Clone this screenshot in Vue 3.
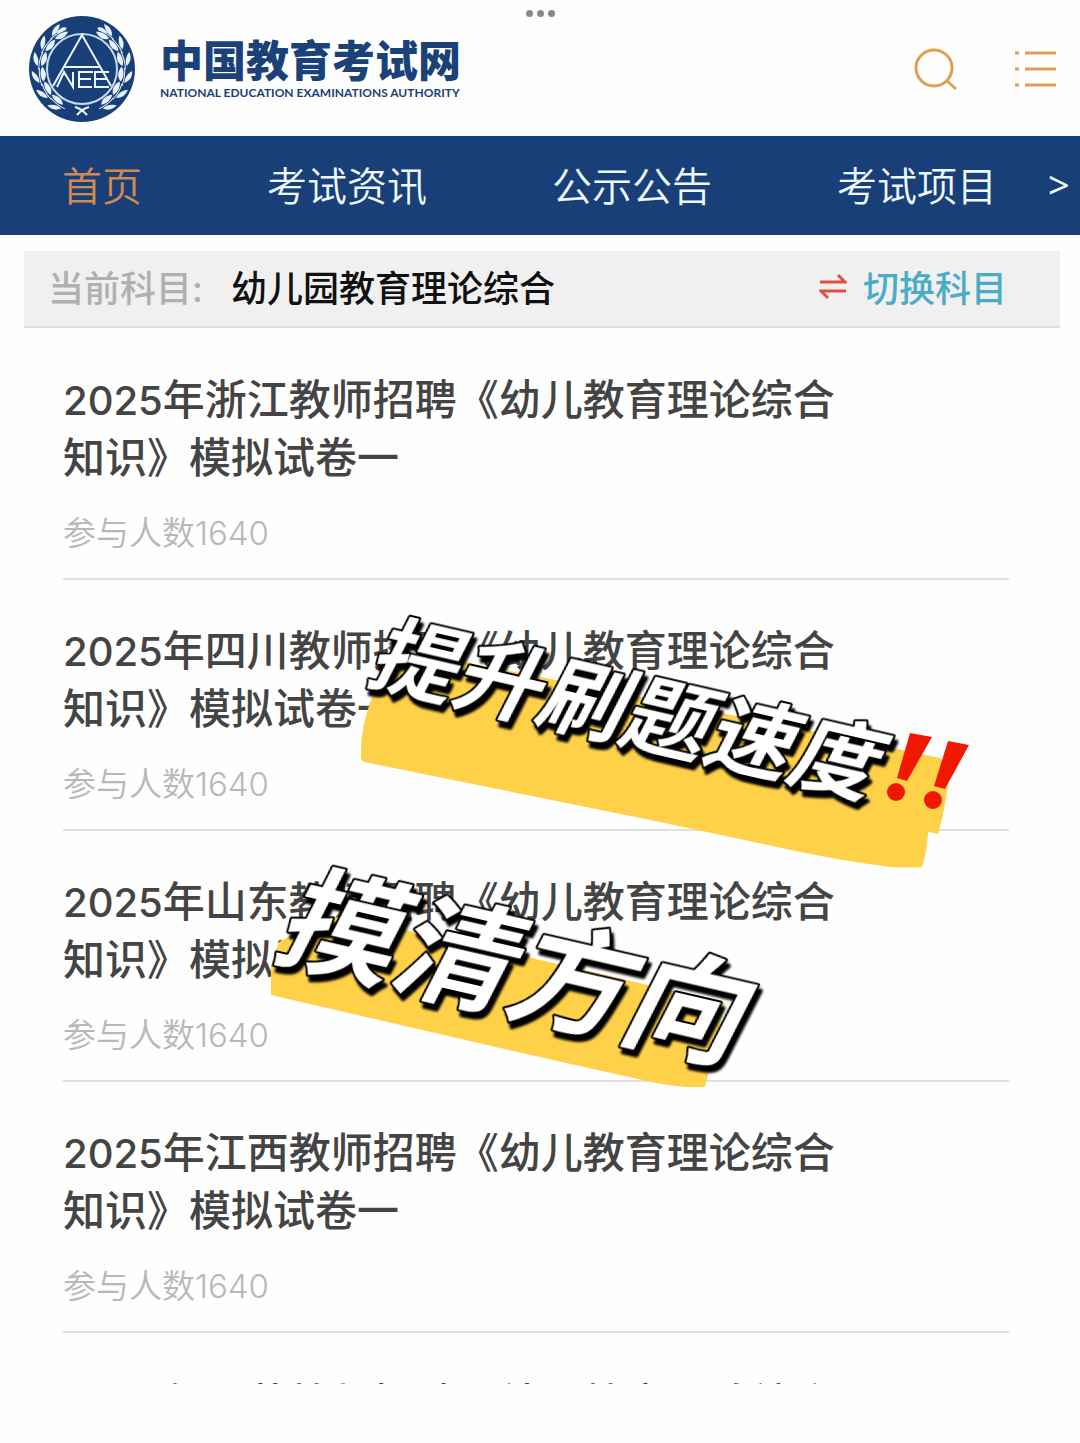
<script setup>
const navItems = ['首页', '考试资讯', '公示公告', '考试项目']
const papers = [
  { province: '浙江', count: 1640 },
  { province: '四川', count: 1640 },
  { province: '山东', count: 1640 },
  { province: '江西', count: 1640 },
  { province: '江苏' }
]
const leafAngles = [-58, -36, -14, 8, 30, 52]
</script>

<template>
  <div class="page">
    <header class="header">
      <span class="dots"><i></i><i></i><i></i></span>
      <a class="brand" href="#">
        <svg class="emblem" viewBox="-54 -54 108 108" aria-hidden="true">
          <circle r="53" fill="#193f78" />
          <g v-for="side in [1, -1]" :key="side" :transform="`scale(${side} 1)`">
            <g v-for="angle in leafAngles" :key="angle" :transform="`rotate(${angle}) translate(43 0)`">
              <path d="M-3 7C-8 2-7-3-4-8C-1-4 0 2-3 7Z" fill="#e6f2fb" />
              <path d="M1 8C0 2 4-3 7-5C8 1 6 5 1 8Z" fill="#e6f2fb" />
              <path d="M-1 11Q1 1-1-7" fill="none" stroke="#e6f2fb" stroke-width="1" />
            </g>
            <path d="M15-41Q20-44 26-36Q19-36 15-41Z" fill="#e6f2fb" />
            <path d="M-5 46Q0 40 7 38" fill="none" stroke="#e6f2fb" stroke-width="2" />
          </g>
          <circle r="35" fill="#193f78" stroke="#c5dcf0" stroke-width="2" />
          <g fill="none" stroke="#eef7ff" stroke-width="2">
            <path d="M-29 17L0-34L29 17M-18-2H18" />
            <path d="M-25 18L-18 3L-9 18V3M11 3H-3V18H10M-3 10H9M27 3H13V18H27M13 10H25" />
          </g>
        </svg>
        <span class="brand-text">
          <strong>中国教育考试网</strong>
          <small>NATIONAL EDUCATION EXAMINATIONS AUTHORITY</small>
        </span>
      </a>
      <button class="icon-button" aria-label="搜索">
        <svg width="44" height="44" viewBox="0 0 44 44" fill="none" stroke="#dda04e" stroke-width="3">
          <circle cx="21" cy="21" r="18" />
          <path d="M33 33L43 42" />
        </svg>
      </button>
      <button class="icon-button menu" aria-label="菜单">
        <svg width="42" height="38" viewBox="0 0 42 38" fill="none" stroke="#dda04e" stroke-width="3">
          <path d="M11 3H42M11 19H42M11 35H42M1 3H5M1 19H5M1 35H5" />
        </svg>
      </button>
    </header>

    <nav class="nav">
      <a v-for="(item, i) in navItems" :key="item" href="#" :class="{ active: i === 0 }">{{ item }}</a>
      <button class="more" aria-label="更多">&gt;</button>
    </nav>

    <main>
      <section class="subject">
        <span class="label">当前科目:</span>
        <span class="current">幼儿园教育理论综合</span>
        <button class="switch">
          <svg width="28" height="26" viewBox="0 0 28 26" fill="none" stroke="#e0503f" stroke-width="3" aria-hidden="true">
            <path d="M1 9H26L19 2M27 18H2L9 25" />
          </svg>
          切换科目
        </button>
      </section>

      <ul class="papers">
        <li v-for="paper in papers" :key="paper.province">
          <h2><span class="year">2025</span>年{{ paper.province }}教师招聘《幼儿教育理论综合知识》模拟试卷一</h2>
          <p v-if="paper.count">参与人数{{ paper.count }}</p>
        </li>
      </ul>

      <svg class="sticker speed" width="660" height="290" viewBox="0 0 660 290">
        <path fill="#ffd149" d="M24 162Q20 160 21 154Q20 128 33 95L58 60Q90 52 125 62L467 130L600 158Q609 168 608 183Q605 210 598 234L588 232Q587 252 582 267Q565 268 550 267Q495 260 437 247L320 222Z" />
        <text class="speed-text" transform="translate(24 81) rotate(13)">提升刷题速度</text>
        <g fill="#f01900" role="img" aria-label="!!">
          <path d="M570 133L592 137L567 181L557 178ZM608 141L629 145L605 189L594 186Z" />
          <circle cx="556" cy="192" r="9" />
          <circle cx="593" cy="200" r="9" />
        </g>
      </svg>

      <svg class="sticker direction" width="540" height="260" viewBox="0 0 540 260">
        <path fill="#ffd149" d="M21 145V115L29 92L80 66L155 80L282 108L475 153L455 237Q430 238 406 233Q310 212 224 192Z" />
        <text class="direction-text" transform="translate(20 105) rotate(13)">摸清方向</text>
      </svg>
    </main>
  </div>
</template>

<style>
body {
  margin: 0;
  background: #fefefe;
}
</style>

<style scoped>
.page {
  position: relative;
  overflow: hidden;
  padding-bottom: 59px;
  font-family: Inter, "Noto Sans CJK SC", sans-serif;
  color: #444;
}

a {
  text-decoration: none;
}

button {
  padding: 0;
  border: 0;
  background: none;
  font: inherit;
  cursor: pointer;
}

.header {
  position: relative;
  display: flex;
  align-items: center;
  box-sizing: border-box;
  height: 136px;
  padding: 2px 24px 0 28px;
}

.dots {
  position: absolute;
  top: 10px;
  left: 0;
  right: 0;
  display: flex;
  justify-content: center;
  gap: 4px;
}

.dots i {
  width: 7px;
  height: 7px;
  border-radius: 50%;
  background: #888;
}

.brand {
  display: flex;
  align-items: center;
  gap: 24px;
  margin-right: auto;
  color: #1b4179;
}

.emblem {
  width: 108px;
  height: 108px;
}

.brand-text {
  display: flex;
  flex-direction: column;
  padding-top: 4px;
  white-space: nowrap;
}

.brand-text strong {
  font-size: 43px;
  font-weight: 900;
  line-height: 44px;
}

.brand-text small {
  font-family: Lato, sans-serif;
  font-size: 12px;
  font-weight: 700;
  line-height: 20px;
}

.icon-button {
  display: flex;
}

.menu {
  margin-left: 57px;
}

.nav {
  display: flex;
  align-items: center;
  gap: 125px;
  box-sizing: border-box;
  height: 99px;
  padding: 0 10px 4px 62px;
  background: #193f78;
  font-size: 40px;
  white-space: nowrap;
}

.nav a {
  color: #eef8ff;
  font-weight: 350;
}

.nav a.active {
  color: #cf8a50;
}

.more {
  margin-left: -74px;
  color: #eef8ff;
  font-family: "Noto Sans", sans-serif;
  font-size: 38px;
}

.subject {
  display: flex;
  align-items: center;
  height: 77px;
  margin: 16px 20px 0 24px;
  padding: 0 53px 6px 24px;
  box-sizing: border-box;
  border-bottom: 2px solid #dedede;
  background: #f0f0f0;
  font-size: 36px;
  font-weight: 500;
}

.label {
  color: #b0b0b0;
}

.current {
  margin-left: 28px;
  color: #111;
}

.switch {
  display: flex;
  align-items: center;
  gap: 16px;
  margin-left: auto;
  color: #4bacc6;
}

.papers {
  margin: 1px 71px 0 63px;
  padding: 0;
  list-style: none;
}

.papers li {
  padding: 42px 0 28px;
  border-bottom: 2px solid #e0e0e0;
}

.papers li:last-child {
  height: 9px;
  padding-bottom: 0;
  border: 0;
  overflow: hidden;
}

h2 {
  max-width: 800px;
  margin: 0;
  font-size: 42px;
  font-weight: 500;
  line-height: 58px;
}

.year {
  font-size: 40px;
  line-height: 40px;
}

p {
  margin: 29px 0 0;
  color: #b8b8b8;
  font-size: 33px;
  font-weight: 350;
  line-height: 34px;
}

.sticker {
  position: absolute;
  overflow: visible;
}

.speed {
  top: 600px;
  left: 340px;
}

.direction {
  top: 850px;
  left: 250px;
}

.sticker text {
  font-family: "Noto Sans CJK SC", sans-serif;
  font-style: italic;
  font-weight: 700;
  fill: #fff;
  stroke: #000;
  stroke-width: 4px;
  stroke-linejoin: round;
  paint-order: stroke;
  filter: drop-shadow(4px 5px 1px #000);
}

.speed-text {
  font-size: 86px;
}

.direction-text {
  font-size: 118px;
}
</style>
